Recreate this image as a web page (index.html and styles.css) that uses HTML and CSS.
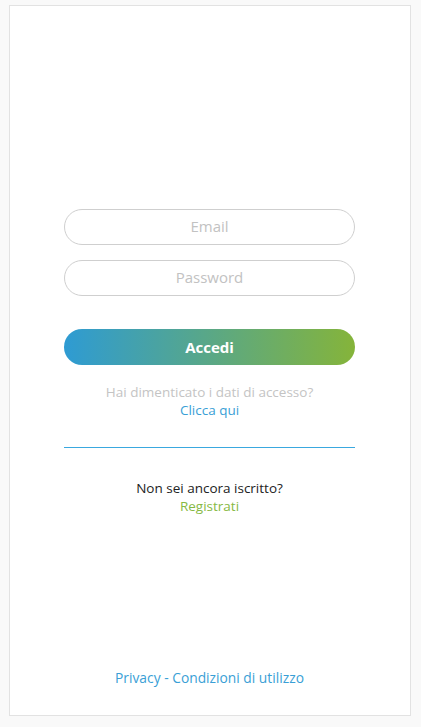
FILE: index.html
```html
<!DOCTYPE html>
<html>
<head>
  <title>Accedi</title>
  <link rel="stylesheet" href="styles.css">
</head>
<body>
  <div class="card">
    <form class="login">
      <input class="field" type="text" placeholder="Email">
      <input class="field" type="password" placeholder="Password">
      <button type="button" class="accedi">Accedi</button>
    </form>

    <p class="forgot">Hai dimenticato i dati di accesso?<br><a href="#" class="blue">Clicca qui</a></p>

    <hr class="divider">

    <p class="signup">Non sei ancora iscritto?<br><a href="#" class="green">Registrati</a></p>

    <p class="footer"><a href="#" class="blue">Privacy</a> <span class="blue">-</span> <a href="#" class="blue">Condizioni di utilizzo</a></p>
  </div>
</body>
</html>
```

FILE: styles.css
```css
body{
 margin: 0;
 background-color: #f9f9f9;
 font-family: "Open Sans", Arial, sans-serif;
}
.card{
 box-sizing: border-box;
 margin: 5px 10px 0 9px;
 height: 711px;
 background-color: #fff;
 border: 1px solid #e2e2e2;
 padding: 203px 55px 0 54px;
 display: flex;
 flex-direction: column;
 text-align: center;
}
.login{
 display: flex;
 flex-direction: column;
 margin: 0;
}
.field{
 box-sizing: border-box;
 height: 36px;
 width: 100%;
 border: 1px solid #cfcfcf;
 border-radius: 18px;
 font-family: "Open Sans", Arial, sans-serif;
 font-size: 15px;
 text-align: center;
 color: #333;
 outline: none;
 margin: 0 0 15px 0;
 padding: 0 20px 2px 20px;
}
.field::placeholder{
 color: #c2c2c2;
}
.accedi{
 margin-top: 18px;
 height: 36px;
 border: none;
 border-radius: 18px;
 background: linear-gradient(to right, #2e9bd3, #85b43a);
 color: #fff;
 font-family: "Open Sans", Arial, sans-serif;
 font-weight: bold;
 font-size: 15px;
}
.forgot{
 margin: 18px 0 0 0;
 font-size: 13.5px;
 line-height: 18px;
 color: #c4c4c4;
}
a{
 text-decoration: none;
}
.blue{
 color: #3a9fd6;
}
.green{
 color: #86b943;
}
.divider{
 flex-shrink: 0;
 width: 100%;
 height: 1px;
 margin: 28px 0 0 0;
 border: none;
 background-color: #3aa8df;
}
.signup{
 margin: 31px 0 0 0;
 font-size: 13.5px;
 line-height: 18px;
 color: #222;
}
.footer{
 margin: auto 0 28px 0;
 font-size: 13.8px;
 line-height: 18px;
}
```
